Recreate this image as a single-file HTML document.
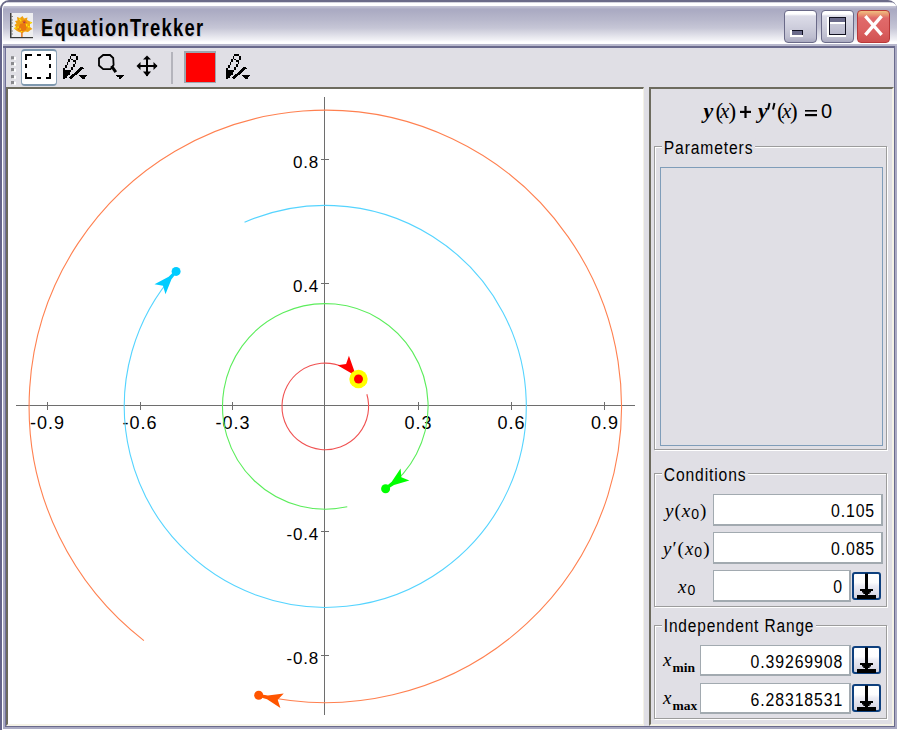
<!DOCTYPE html>
<html><head><meta charset="utf-8">
<style>
*{margin:0;padding:0;box-sizing:border-box}
html,body{width:900px;height:732px;overflow:hidden;background:#fff;font-family:"Liberation Sans",sans-serif}
.a{position:absolute}
#tout{left:0;top:0;width:897px;height:48px;border-radius:9px 9px 0 0;background:#6a6a88}
#title{left:2px;top:2px;width:895px;height:46px;border-radius:7px 7px 0 0;box-shadow:inset 1px 0 0 #fff;
background:linear-gradient(to bottom,#a8a8bc 0,#fff 1px,#fff 4px,#c6c6d6 4px,#b6b6cc 6px,#a9a9c2 7px,#adadc4 10px,#b8b8cc 18px,#c6c6d6 26px,#dcdce6 32px,#f2f2f6 38px,#fff 40px,#fff 42px,#b8b8cc 42px,#b8b8cc 44px,#6a6a8c 44px,#6a6a8c 46px)}
#lf{left:0;top:8px;width:3px;height:722px;background:linear-gradient(to right,#65658a 0,#65658a 2px,#fff 2px,#fff 3px)}
#lf2{left:3px;top:48px;width:3px;height:681px;background:linear-gradient(to right,#a9a9c2 0,#a9a9c2 2px,#71719a 2px,#71719a 3px)}
#rf{left:894px;top:46px;width:3px;height:683px;background:linear-gradient(to right,#6a6a8c 0,#6a6a8c 1px,#a9a9c2 1px)}
#bf{left:3px;top:726px;width:894px;height:3px;background:linear-gradient(to bottom,#6a6a8c 0,#6a6a8c 1px,#a9a9c2 1px)}
#bf2{left:3px;top:726px;width:2px;height:1px;background:#a9a9c2}
#bf3{left:895px;top:726px;width:2px;height:1px;background:#a9a9c2}
#win{left:6px;top:48px;width:888px;height:678px;background:#e0dfe5}
.ttl{left:41px;top:14px;font:bold 23px "Liberation Sans",sans-serif;color:#000;transform:scaleX(.8);transform-origin:0 0;white-space:nowrap;text-shadow:1px 1px 0 #c8c8d8;line-height:28px;letter-spacing:1.6px}
.tb{border-radius:3px}
#plot{left:6px;top:87px;width:638px;height:639px;background:#fff;border-top:2px solid #6d6b5e;border-left:2px solid #6d6b5e;border-right:1px solid #f4f2e6;border-bottom:2px solid #f4f2e6}
#panel{left:649px;top:87px;width:245px;height:639px;border-top:2px solid #6d6b5e;border-left:2px solid #6d6b5e;border-right:2px solid #f4f2e6;border-bottom:2px solid #f4f2e6}
.grp{border:1px solid #9c9c9c;box-shadow:1px 1px 0 #fff, inset 1px 1px 0 #fff}
.gl{background:#e0dfe5;font-size:18px;line-height:20px;padding:0 2px;white-space:nowrap;color:#000;transform:scaleX(.87);transform-origin:0 0;letter-spacing:1px}
.fld{background:#fff;border:1px solid #a2aab0;border-right-width:2px;border-bottom-width:2px;font-size:18px;text-align:right;line-height:31px;padding-top:1px;padding-right:7.5px;color:#000}
.fld span{display:inline-block;transform:scaleX(.88);transform-origin:100% 50%;letter-spacing:1px;margin-right:-2px}
.btn{width:29px;height:28px;border:2px solid #0e407e;border-radius:3px;background:linear-gradient(to bottom,#fff 0,#fdfdfe 35%,#ececf4 50%,#d2d2e0 100%)}
.lab{font-family:"Liberation Serif",serif;font-size:19px;line-height:24px;color:#000;white-space:nowrap;letter-spacing:1px}
.lab i{font-style:italic}
.lab s{text-decoration:none;font-size:14px;position:relative;top:2px;font-family:"Liberation Sans",sans-serif}
.lab s.b{font-family:"Liberation Serif",serif;font-weight:bold;top:5.5px;font-size:13.5px;letter-spacing:0}
</style></head><body>
<div id="tout" class="a"></div>
<div id="title" class="a"></div>
<div id="lf" class="a"></div>
<div id="lf2" class="a"></div>
<div id="rf" class="a"></div>
<div id="bf" class="a"></div>
<div id="bf2" class="a"></div>
<div id="bf3" class="a"></div>
<div id="win" class="a"></div>

<!-- app icon -->
<svg class="a" style="left:0;top:0" width="40" height="42" viewBox="0 0 40 42">
<rect x="10" y="13" width="23" height="25" fill="#eeeef0"/>
<path d="M17,17 L20,18 L22.5,16 L24,18.5 L27.5,17.5 L27,20 L30,21.5 L32.5,22.5 L30,24 L30,27 L32.5,29 L30.5,30 L28,32 L25,31.5 L22.5,33 L19,32 L17,31 L14,28.5 L16,27 L14.5,25 L16.5,23.5 L15,21 L17.5,20.5 Z" fill="#f0a010"/>
<path d="M20,24 L24,23 L27,26 L26,30 L22,31.5 L18,30 Z" fill="#e87810"/>
<path d="M22,21 L25,20 L27,23 L24,24 Z" fill="#e86c10"/>
<rect x="21.2" y="31" width="1.4" height="6" fill="#e87010"/>
<g fill="#ffe800"><rect x="19" y="18.5" width="1.5" height="1.5"/><rect x="20" y="20" width="1.3" height="1.3"/><rect x="14.5" y="27.5" width="2" height="1.2"/><rect x="17.5" y="26.5" width="1.3" height="1.3"/><rect x="19.5" y="28.5" width="1.5" height="1.2"/><rect x="21" y="31" width="1.3" height="1.2"/><rect x="26" y="24" width="1.3" height="2.5"/><rect x="28" y="26" width="1.5" height="1.5"/><rect x="30" y="22" width="1.5" height="1.5"/></g>
<rect x="23.5" y="21.8" width="1.3" height="1" fill="#802080"/>
<rect x="10" y="13" width="1.5" height="25" fill="#3a3a3a"/>
<rect x="10" y="37" width="23" height="1.2" fill="#3a3a3a"/>
<g fill="#5a5a5a"><rect x="11.5" y="16" width="1.2" height="1"/><rect x="11.5" y="19.5" width="1.2" height="1"/><rect x="11.5" y="22.5" width="1.2" height="1"/><rect x="11.5" y="26" width="1.2" height="1"/><rect x="11.5" y="30.5" width="1.2" height="1"/><rect x="11.5" y="33.5" width="1.2" height="1"/></g>
</svg>
<div class="a ttl">EquationTrekker</div>

<!-- title buttons -->
<div class="a" style="left:784px;top:10px;width:33px;height:33px;border:1.5px solid #6a6a88;border-radius:4px;background:linear-gradient(to bottom,#fff 0,#fff 3px,#dcdce8 5px,#cfcfdd 50%,#bdbdcf 85%,#a9a9bf 100%)"></div>
<div class="a" style="left:790px;top:30px;width:13px;height:7px;background:#fff"></div>
<div class="a" style="left:792px;top:30px;width:11px;height:5px;background:#6a6a8a;border-top:1.5px solid #101020;border-right:1px solid #101020"></div>

<div class="a" style="left:821px;top:10px;width:33px;height:33px;border:1.5px solid #6a6a88;border-radius:4px;background:linear-gradient(to bottom,#fff 0,#fff 3px,#dcdce8 5px,#cfcfdd 50%,#bdbdcf 85%,#a9a9bf 100%)"></div>
<div class="a" style="left:827px;top:17px;width:19px;height:20px;background:#fff"></div>
<div class="a" style="left:829px;top:17px;width:17px;height:18px;border:1.5px solid #101020;background:linear-gradient(to bottom,#6a6a8a 0,#6a6a8a 4px,#fff 4px,#fff 6px,#c8c8d8 6px,#b8b8cc 100%)"></div>

<div class="a" style="left:857px;top:10px;width:33px;height:33px;border:1.5px solid #b83838;border-radius:4px;background:linear-gradient(to bottom,#f0c080 0,#e89070 4px,#e06a6a 7px,#dc6262 60%,#d05050 100%)"></div>
<svg class="a" style="left:857px;top:10px" width="33" height="33" viewBox="0 0 33 33">
<path d="M9.5,7.5L23.5,23.5M23.5,7.5L9.5,23.5" stroke="#fff" stroke-width="3.4" stroke-linecap="square"/>
</svg>

<!-- toolbar -->
<div class="a" style="left:6px;top:48px;width:888px;height:39px;background:#e0dfe5"></div>
<svg class="a" style="left:0;top:0" width="20" height="90" viewBox="0 0 20 90"><g fill="#fff"><rect x="12" y="57.0" width="4" height="3"/><rect x="12" y="62.8" width="4" height="3"/><rect x="12" y="68.8" width="4" height="3"/><rect x="12" y="75.8" width="4" height="3"/><rect x="12" y="81.8" width="4" height="3"/></g><g fill="#8a8a8e"><rect x="11" y="56.2" width="3" height="3.2"/><rect x="11" y="62.0" width="3" height="3.2"/><rect x="11" y="68.0" width="3" height="3.2"/><rect x="11" y="75.0" width="3" height="3.2"/><rect x="11" y="81.0" width="3" height="3.2"/></g></svg>
<div class="a" style="left:21px;top:49px;width:36px;height:37px;background:#fff;border:1px solid #8ea4b8;border-top:2px solid #7e98ae;border-bottom:2px solid #7e98ae;border-radius:4px"></div>
<svg class="a" style="left:0;top:0" width="300" height="90" viewBox="0 0 300 90" shape-rendering="crispEdges">
<g fill="#000">
<!-- select -->
<rect x="25" y="54" width="7" height="2"/><rect x="25" y="54" width="2" height="6"/>
<rect x="37" y="54" width="4" height="2"/>
<rect x="46" y="54" width="5" height="2"/><rect x="49" y="54" width="2" height="6"/>
<rect x="25" y="64" width="2" height="4"/><rect x="49" y="64" width="2" height="4"/>
<rect x="25" y="73" width="2" height="6"/><rect x="25" y="77" width="7" height="2"/>
<rect x="37" y="77" width="4" height="2"/>
<rect x="49" y="73" width="2" height="6"/><rect x="46" y="77" width="5" height="2"/>
<!-- move -->
<rect x="146" y="57" width="2" height="19"/><rect x="138" y="65" width="19" height="2"/>
</g>
<g fill="#000" shape-rendering="auto">
<polygon points="147,55.5 151,59.5 143,59.5"/>
<polygon points="147,76.5 151,71.5 143,71.5"/>
<polygon points="136.5,66 140.5,62 140.5,70"/>
<polygon points="157.5,66 153.5,62 153.5,70"/>
</g>
<g fill="none" stroke="#000" shape-rendering="auto">
<!-- zoom -->
<path d="M103.2,55 L110,55 L113.2,58 L113.6,65 L110.5,69.2 L103.2,69.2 L99,65.5 L99,58.5 Z" stroke-width="1.8"/>
<path d="M111.5,66 L115.8,72.2" stroke-width="3"/>
</g>
<polygon points="116,75 124.2,75 123,77 122,77 121,79 119.4,79 118.4,77 117.2,77" fill="#000"/>
<!-- pencils -->
<g id="pen" fill="#000">
<rect x="71" y="54" width="5" height="1.6"/>
<rect x="70" y="56" width="1.2" height="2.8"/>
<rect x="76" y="56" width="2" height="3.6"/>
<rect x="71" y="59" width="1.8" height="0.9"/>
<rect x="73" y="60.2" width="2.8" height="1.5"/>
<rect x="75" y="61.6" width="1.1" height="2"/>
<rect x="73.3" y="64" width="1.6" height="2.6"/>
<rect x="71" y="67" width="1.9" height="2.8"/>
<rect x="68" y="59" width="1.8" height="2.7"/>
<rect x="67" y="62" width="1.1" height="2.7"/>
<rect x="65" y="65" width="1.8" height="2.7"/>
<polygon points="63,68 65,68 65,70 70.7,70 70.7,72 69.8,72 69.8,74.7 68,74.7 68,75.7 66.8,75.7 66.8,77.7 64.8,77.7 64.8,78.8 63,78.8"/>
<path d="M71.2,77.4 L81.8,68.2" stroke="#000" stroke-width="2.8" stroke-linecap="square"/>
<polygon points="79,75 87,75 86,77 85,77 84.4,79 82.6,79 81,77 80,77"/>
</g>
<use href="#pen" transform="translate(163,0)"/>
<!-- separator -->
<rect x="171" y="52" width="2" height="32" fill="#b4b4bc"/>
<!-- swatch -->
<rect x="184" y="51" width="32" height="32" fill="#9ea6ae"/>
<rect x="185.5" y="52.5" width="29" height="29" fill="#ff0000"/>
</svg>

<!-- plot -->
<div id="plot" class="a"></div>
<svg class="a" style="left:0;top:0" width="900" height="732" viewBox="0 0 900 732">
<defs><clipPath id="pc"><rect x="8" y="89" width="635" height="635"/></clipPath></defs>
<g clip-path="url(#pc)">
<g stroke="#6e6e6e" stroke-width="1" shape-rendering="crispEdges">
<line x1="16" y1="405.5" x2="635" y2="405.5"/>
<line x1="324.5" y1="97" x2="324.5" y2="715"/>
<line x1="47" y1="402" x2="47" y2="410"/>
<line x1="140" y1="402" x2="140" y2="410"/>
<line x1="232" y1="402" x2="232" y2="410"/>
<line x1="418" y1="402" x2="418" y2="410"/>
<line x1="511" y1="402" x2="511" y2="410"/>
<line x1="604" y1="402" x2="604" y2="410"/>
<line x1="321" y1="159.5" x2="329" y2="159.5"/>
<line x1="321" y1="283.5" x2="329" y2="283.5"/>
<line x1="321" y1="531" x2="329" y2="531"/>
<line x1="321" y1="655" x2="329" y2="655"/>
</g>
<g font-family="Liberation Sans" font-size="18" fill="#000" text-anchor="middle" letter-spacing="1">
<text x="47.5" y="429">-0.9</text>
<text x="140" y="429">-0.6</text>
<text x="233" y="429">-0.3</text>
<text x="418.5" y="429">0.3</text>
<text x="511.5" y="429">0.6</text>
<text x="605" y="429">0.9</text>
</g>
<g font-family="Liberation Sans" font-size="17" fill="#000" text-anchor="end" letter-spacing="0.8">
<text x="319" y="168">0.8</text>
<text x="319" y="292">0.4</text>
<text x="319" y="540">-0.4</text>
<text x="319" y="664">-0.8</text>
</g>
<path d="M366.86,394.26 A43.30,43.30 0 1 1 358.70,378.84" fill="none" stroke="#f05252" stroke-width="1.1"/>
<polygon points="357.42,379.89 351.31,373.27 337.52,365.20 346.09,363.96 348.93,355.78 354.24,370.85 359.58,378.11" fill="#ff0000"/>
<circle cx="358.5" cy="379.0" r="9.2" fill="#ffff00"/>
<circle cx="358.5" cy="379.0" r="4.5" fill="#ff0000"/>
<path d="M347.28,506.82 A102.80,102.80 0 1 1 386.06,489.32" fill="none" stroke="#5ced5c" stroke-width="1.1"/>
<polygon points="384.77,487.57 391.74,481.85 400.59,468.55 401.33,477.18 409.33,480.48 393.98,484.91 386.43,489.83" fill="#00ff00"/>
<circle cx="385.6" cy="488.7" r="4.5" fill="#00ff00"/>
<path d="M244.53,222.34 A201.00,201.00 0 1 1 176.26,271.54" fill="none" stroke="#55d4ff" stroke-width="1.1"/>
<polygon points="177.14,272.34 171.47,279.35 165.48,294.16 163.02,285.86 154.51,284.23 168.65,276.80 175.06,270.46" fill="#00ccff"/>
<circle cx="176.1" cy="271.4" r="4.5" fill="#00ccff"/>
<path d="M143.91,640.56 A296.20,296.20 0 1 1 258.76,695.03" fill="none" stroke="#ff8050" stroke-width="1.1"/>
<polygon points="259.01,693.94 267.90,695.47 283.75,693.48 277.70,699.68 280.42,707.90 267.04,699.17 258.39,696.66" fill="#ff5500"/>
<circle cx="258.7" cy="695.3" r="4.5" fill="#ff5500"/>
</g>
</svg>

<!-- panel -->
<div id="panel" class="a"></div>
<svg class="a" style="left:0;top:0" width="900" height="140" viewBox="0 0 900 140">
<g font-family="Liberation Serif" fill="#000">
<text x="703.5" y="118" font-size="22" font-weight="bold" font-style="italic">y</text>
<text x="715.5" y="119" font-size="23">(</text>
<text x="720" y="118" font-size="21" font-style="italic">x</text>
<text x="728.5" y="119" font-size="23">)</text>
<text x="758" y="118" font-size="22" font-weight="bold" font-style="italic">y</text>
<text x="777" y="119" font-size="23">(</text>
<text x="782" y="118" font-size="21" font-style="italic">x</text>
<text x="790" y="119" font-size="23">)</text>
</g>
<g font-family="Liberation Sans" fill="#000" font-weight="bold">


</g>
<text x="821" y="118" font-size="20" font-family="Liberation Sans" fill="#000">0</text>
<path d="M769.5,103 L768,109.5 M774.5,103 L773,109.5" stroke="#000" stroke-width="2"/>
<rect x="740" y="110.8" width="11" height="2.2" fill="#000"/><rect x="744.4" y="106" width="2.2" height="12" fill="#000"/>
<rect x="805" y="110" width="12" height="1.6" fill="#000"/><rect x="805" y="114" width="12" height="2.2" fill="#000"/>
</svg>

<div class="a grp" style="left:654px;top:146px;width:233px;height:304px"></div>
<div class="a gl" style="left:662px;top:138px">Parameters</div>
<div class="a" style="left:660px;top:167px;width:223px;height:279px;border:1px solid #7f9db9"></div>

<div class="a grp" style="left:654px;top:473px;width:233px;height:134px"></div>
<div class="a gl" style="left:662px;top:465px">Conditions</div>
<div class="a lab" style="left:665px;top:499px"><i>y</i>(<i>x</i><s>0</s>)</div>
<div class="a lab" style="left:663px;top:537px"><i>y</i>′(<i>x</i><s>0</s>)</div>
<div class="a lab" style="left:678px;top:575px"><i>x</i><s>0</s></div>
<div class="a fld" style="left:713px;top:494px;width:170px;height:32px"><span>0.105</span></div>
<div class="a fld" style="left:713px;top:532px;width:170px;height:32px"><span>0.085</span></div>
<div class="a fld" style="left:713px;top:570px;width:138px;height:32px"><span>0</span></div>
<div class="a btn" style="left:852px;top:572px"></div>

<div class="a grp" style="left:654px;top:625px;width:233px;height:94px"></div>
<div class="a gl" style="left:662px;top:616px;transform:scaleX(.86)">Independent Range</div>
<div class="a lab" style="left:663px;top:648px"><i>x</i><s class="b">min</s></div>
<div class="a lab" style="left:663px;top:686px"><i>x</i><s class="b">max</s></div>
<div class="a fld" style="left:700px;top:645px;width:151px;height:31px"><span>0.39269908</span></div>
<div class="a fld" style="left:700px;top:683px;width:151px;height:31px"><span>6.28318531</span></div>
<div class="a btn" style="left:852px;top:646px"></div>
<div class="a btn" style="left:852px;top:684px"></div>
<svg class="a" style="left:0;top:0" width="900" height="732" viewBox="0 0 900 732">
<defs><g id="dl"><rect x="13" y="1.5" width="3" height="22"/><polygon points="8,17 21,17 21,19 19,19 19,20.5 17.6,20.5 17.6,22 11.3,22 11.3,20.5 10,20.5 10,19 8,19"/><rect x="5" y="23" width="19" height="4"/></g></defs>
<use href="#dl" transform="translate(852,572)"/>
<use href="#dl" transform="translate(852,646)"/>
<use href="#dl" transform="translate(852,684)"/>
</svg>
</body></html>
